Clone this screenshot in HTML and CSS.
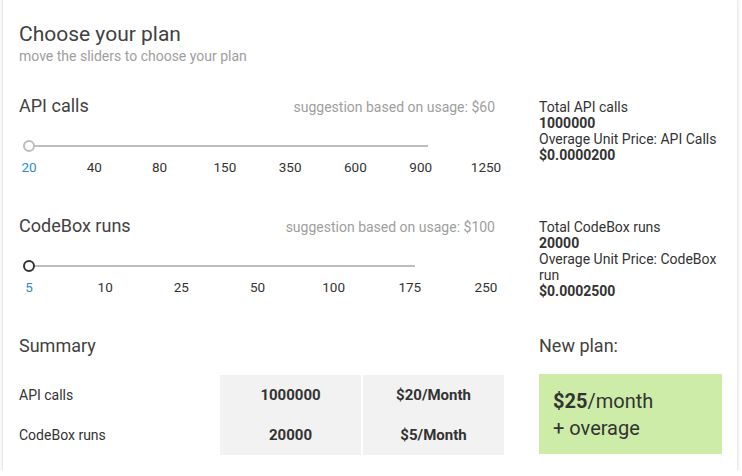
FILE: index.html
```html
<!DOCTYPE html>
<html>
<head>
<meta charset="utf-8">
<link rel="stylesheet" href="styles.css">
</head>
<body>
<div class="card">
  <h1 class="title">Choose your plan</h1>
  <div class="subtitle">move the sliders to choose your plan</div>

  <div class="section first">
    <div class="left">
      <div class="section-head">
        <span class="section-name">API calls</span>
        <span class="suggestion">suggestion based on usage: $60</span>
      </div>
      <div class="slider">
        <div class="track track-api"></div>
        <div class="thumb thumb-light"></div>
      </div>
      <div class="ticks">
        <span class="active">20</span><span>40</span><span>80</span><span>150</span><span>350</span><span>600</span><span>900</span><span>1250</span>
      </div>
    </div>
    <div class="info">
      <div>Total API calls</div>
      <div class="strong">1000000</div>
      <div>Overage Unit Price: API Calls</div>
      <div class="strong">$0.0000200</div>
    </div>
  </div>

  <div class="section">
    <div class="left">
      <div class="section-head">
        <span class="section-name">CodeBox runs</span>
        <span class="suggestion">suggestion based on usage: $100</span>
      </div>
      <div class="slider">
        <div class="track track-cb"></div>
        <div class="thumb thumb-dark"></div>
      </div>
      <div class="ticks">
        <span class="active">5</span><span>10</span><span>25</span><span>50</span><span>100</span><span>175</span><span>250</span>
      </div>
    </div>
    <div class="info">
      <div>Total CodeBox runs</div>
      <div class="strong">20000</div>
      <div>Overage Unit Price: CodeBox run</div>
      <div class="strong">$0.0002500</div>
    </div>
  </div>

  <div class="section last">
    <div class="left">
      <div class="section-name">Summary</div>
      <div class="summary">
        <div class="s-label">API calls</div>
        <div class="s-cell">1000000</div>
        <div class="s-cell">$20/Month</div>
        <div class="s-label">CodeBox runs</div>
        <div class="s-cell">20000</div>
        <div class="s-cell">$5/Month</div>
      </div>
    </div>
    <div class="plan">
      <div class="section-name">New plan:</div>
      <div class="plan-box">
        <div><b>$25</b>/month</div>
        <div>+ overage</div>
      </div>
    </div>
  </div>
</div>
</body>
</html>
```

FILE: styles.css
```css
html, body {
  margin: 0;
  padding: 0;
  background: #ffffff;
}

.card {
  width: 734px;
  box-sizing: border-box;
  margin: -4px 0 0 3px;
  padding: 26px 16px 16px 16px;
  background: #ffffff;
  box-shadow: 0 1px 4px rgba(0, 0, 0, 0.2);
  font-family: Roboto, "Liberation Sans", sans-serif;
  color: #424242;
}

.title {
  margin: 0;
  font-size: 21px;
  line-height: 24px;
  font-weight: 400;
  color: #424242;
}

.subtitle {
  margin-top: 2px;
  font-size: 14px;
  line-height: 16px;
  color: #9e9e9e;
}

.section {
  display: grid;
  grid-template-columns: 483px 183px;
  column-gap: 37px;
  margin-top: 40px;
}

.section.first {
  margin-top: 31px;
}

.section.last {
  margin-top: 36px;
}

.section-head {
  width: 477px;
  display: flex;
  justify-content: space-between;
  align-items: baseline;
}

.section-name {
  font-size: 18px;
  line-height: 22px;
  color: #424242;
}

.suggestion {
  font-size: 14px;
  color: #9e9e9e;
  margin-right: 1px;
}

.slider {
  position: relative;
  width: 477px;
  height: 20px;
  margin-top: 19px;
}

.track {
  height: 2px;
  margin-left: 10px;
  position: relative;
  top: 9px;
  background: #bdbdbd;
}

.track-api {
  width: 399px;
}

.track-cb {
  width: 386px;
}

.thumb {
  position: absolute;
  left: 4px;
  top: 4px;
  width: 8px;
  height: 8px;
  border-radius: 50%;
  background: #ffffff;
}

.thumb-light {
  border: 2px solid #bdbdbd;
}

.thumb-dark {
  border: 2px solid #333333;
}

.ticks {
  width: 477px;
  display: flex;
  justify-content: space-between;
  margin-top: 3px;
  font-size: 13.5px;
  line-height: 16px;
  color: #333333;
}

.ticks span {
  width: 20px;
  display: flex;
  justify-content: center;
  white-space: nowrap;
}

.ticks span.active {
  color: #2a8bd2;
}

.info {
  margin-top: 4px;
  font-size: 14px;
  line-height: 16px;
  color: #333333;
}

.info .strong {
  font-weight: 700;
}

.summary {
  display: grid;
  grid-template-columns: 199px 141px 141px;
  grid-auto-rows: 40px;
  column-gap: 2px;
  margin-top: 18px;
}

.s-label {
  display: flex;
  align-items: center;
  font-size: 14px;
  color: #333333;
}

.s-cell {
  display: flex;
  align-items: center;
  justify-content: center;
  background: #f2f2f2;
  font-size: 15px;
  font-weight: 700;
  color: #333333;
}

.plan-box {
  margin-top: 17px;
  height: 80px;
  box-sizing: border-box;
  padding: 14px 14px 0 14px;
  background: #cdeca7;
  font-size: 20px;
  line-height: 27px;
  color: #333333;
}

.plan-box b {
  font-weight: 700;
}
```
